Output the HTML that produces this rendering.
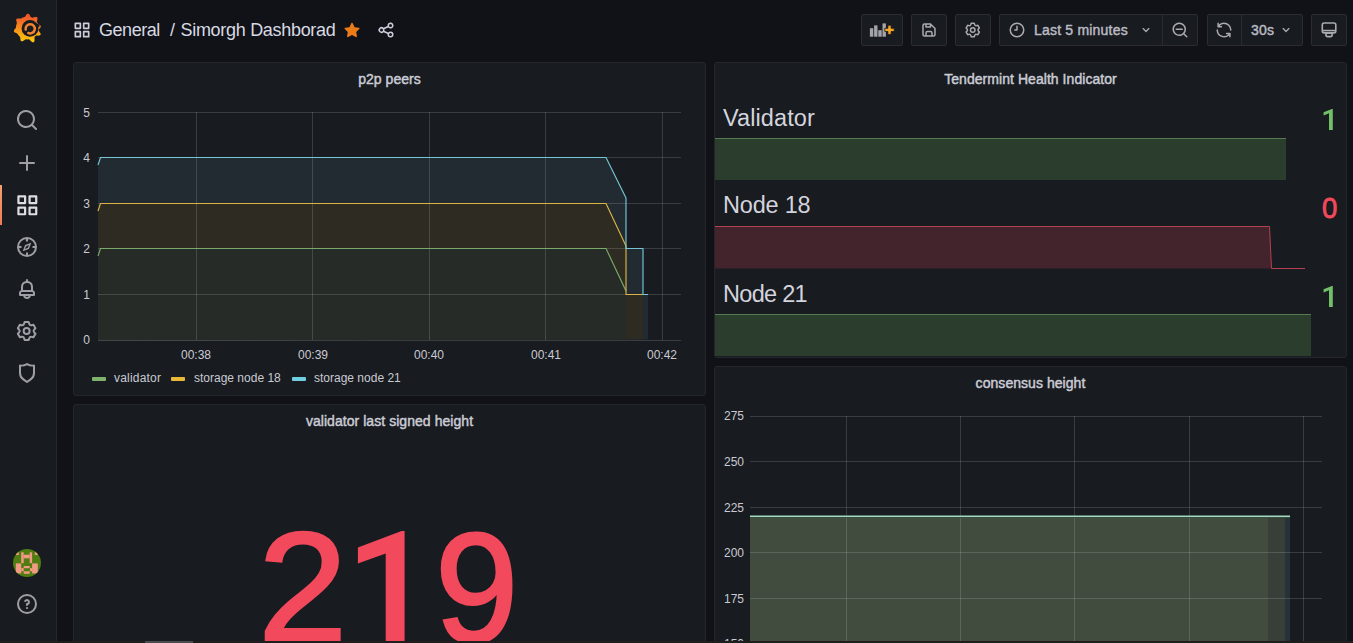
<!DOCTYPE html>
<html><head><meta charset="utf-8">
<style>
*{box-sizing:border-box}
html,body{margin:0;padding:0;width:1353px;height:643px;overflow:hidden;background:#111217;font-family:"Liberation Sans",sans-serif;color:#ccccdc}
.abs{position:absolute}
#side{position:absolute;left:0;top:0;width:57px;height:643px;background:#181b1f;border-right:1px solid #25272c}
.sico{position:absolute;left:15px;width:24px;height:24px;fill:#9d9ea6}
.btn{position:absolute;top:14px;height:32px;background:#181b1f;border:1px solid #2a2c31;border-radius:2px}
.ico{position:absolute;width:18px;height:18px;fill:#a9aab2}
.panel{position:absolute;background:#181b1f;border:1px solid #24262b;border-radius:3px;overflow:hidden}
.ptitle{position:absolute;left:0;right:0;text-align:center;font-size:14px;line-height:16px;font-weight:400;letter-spacing:0.05px;-webkit-text-stroke:0.45px #cbccd6;color:#cbccd6;white-space:nowrap}
.lbl{position:absolute;font-size:12px;line-height:14px;color:#c9cad3;white-space:nowrap}
.yl{position:absolute;font-size:12px;line-height:14px;color:#c9cad3;text-align:right;width:40px}
.xl{position:absolute;font-size:12px;line-height:14px;color:#c9cad3;text-align:center;width:60px}
.hname{position:absolute;left:9px;font-size:23.5px;line-height:28px;color:#d3d4de;white-space:nowrap}
.hval{position:absolute;right:12px;font-size:29px;line-height:34px;white-space:nowrap}
</style></head><body>
<div id="side">
  <!-- logo -->
  <svg class="abs" style="left:13px;top:13px" width="30" height="30" viewBox="0 0 30 30">
    <defs><linearGradient id="lg" x1="0" y1="0" x2="0" y2="1"><stop offset="0.1" stop-color="#f1582b"/><stop offset="0.95" stop-color="#fcc60c"/></linearGradient></defs>
    <path fill="url(#lg)" d="M2.72,15.00 L2.89,14.60 L2.93,14.20 L2.96,13.81 L3.01,13.41 L3.07,13.02 L3.15,12.63 L3.24,12.24 L3.34,11.86 L3.46,11.48 L3.59,11.10 L3.73,10.73 L3.86,10.35 L3.87,9.91 L3.76,9.40 L3.58,8.81 L3.38,8.18 L3.23,7.53 L3.18,6.92 L3.26,6.38 L3.50,5.94 L3.89,5.63 L4.41,5.45 L5.03,5.40 L5.69,5.43 L6.34,5.52 L6.95,5.59 L7.48,5.61 L7.91,5.53 L8.26,5.33 L8.60,5.13 L8.95,4.93 L9.30,4.75 L9.66,4.59 L10.03,4.43 L10.40,4.29 L10.78,4.16 L11.16,4.04 L11.54,3.94 L11.91,3.75 L12.25,3.39 L12.60,2.89 L12.97,2.31 L13.37,1.72 L13.82,1.20 L14.30,0.82 L14.80,0.63 L15.30,0.66 L15.78,0.90 L16.22,1.33 L16.61,1.89 L16.95,2.52 L17.26,3.13 L17.55,3.67 L17.85,4.06 L18.20,4.29 L18.57,4.43 L18.94,4.59 L19.31,4.73 L19.76,4.72 L20.32,4.58 L20.96,4.35 L21.65,4.10 L22.36,3.91 L23.03,3.82 L23.62,3.90 L24.07,4.15 L24.37,4.58 L24.50,5.15 L24.49,5.82 L24.37,6.55 L24.20,7.27 L24.04,7.93 L23.95,8.49 L23.99,8.94 L24.17,9.30 L24.37,9.65 L24.55,10.00 L24.71,10.36 L24.94,10.70 L25.28,11.00 L25.72,11.29 L26.22,11.58 L26.72,11.90 L27.18,12.26 L27.53,12.67 L27.75,13.11 L27.81,13.58 L27.70,14.06 L27.45,14.54 L27.10,15.00 L26.69,15.43 L26.28,15.84 L25.92,16.22 L25.66,16.60 L25.53,16.98 L25.57,17.39 L25.80,17.87 L26.19,18.41 L26.65,19.01 L27.11,19.66 L27.47,20.32 L27.67,20.95 L27.67,21.52 L27.43,21.98 L26.98,22.32 L26.35,22.53 L25.60,22.62 L24.81,22.63 L24.05,22.62 L23.38,22.62 L22.86,22.71 L22.50,22.92 L22.22,23.20 L21.93,23.47 L21.65,23.76 L21.51,24.23 L21.49,24.90 L21.53,25.72 L21.56,26.61 L21.52,27.50 L21.37,28.29 L21.08,28.89 L20.65,29.25 L20.09,29.33 L19.45,29.14 L18.76,28.73 L18.07,28.16 L17.43,27.54 L16.84,26.97 L16.33,26.54 L15.89,26.32 L15.49,26.34 L15.10,26.37 L14.70,26.39 L14.30,26.40 L13.90,26.39 L13.50,26.37 L13.11,26.34 L12.71,26.32 L12.28,26.46 L11.80,26.75 L11.27,27.15 L10.69,27.59 L10.08,27.97 L9.48,28.25 L8.91,28.35 L8.40,28.25 L7.99,27.94 L7.68,27.45 L7.48,26.81 L7.36,26.10 L7.30,25.38 L7.24,24.72 L7.14,24.17 L6.96,23.75 L6.67,23.47 L6.38,23.20 L6.10,22.92 L5.83,22.63 L5.57,22.33 L5.32,22.02 L5.08,21.70 L4.85,21.37 L4.63,21.04 L4.41,20.71 L4.08,20.44 L3.63,20.21 L3.09,19.99 L2.51,19.76 L1.96,19.49 L1.47,19.17 L1.11,18.78 L0.91,18.34 L0.88,17.85 L1.02,17.34 L1.29,16.83 L1.66,16.33 L2.06,15.86 L2.43,15.41Z"/>
    <circle cx="17" cy="15.4" r="8.4" fill="#181b1f"/>
    <path d="M22.5,9.8 L26.6,11.8 L26.2,14.2 L24.8,14.2Z" fill="#181b1f"/>
    <path fill="none" stroke="#f3842f" stroke-width="2.5" stroke-linecap="round" d="M12.67,16.60 A4.6,4.6 0 1 1 15.26,19.97"/>
  </svg>
  <svg class="sico" style="top:108px" viewBox="0 0 24 24"><path d="M21.71,20.29,18,16.61A9,9,0,1,0,16.61,18l3.68,3.68a1,1,0,0,0,1.42,0A1,1,0,0,0,21.71,20.29ZM11,18a7,7,0,1,1,7-7A7,7,0,0,1,11,18Z"/></svg>
  <svg class="sico" style="top:151px" viewBox="0 0 24 24"><path d="M19,11H13V5a1,1,0,0,0-2,0v6H5a1,1,0,0,0,0,2h6v6a1,1,0,0,0,2,0V13h6a1,1,0,0,0,0-2Z"/></svg>
  <div class="abs" style="left:0;top:185px;width:2px;height:40px;background:linear-gradient(#f4a06c,#ee7d57)"></div>
  <svg class="sico" style="left:13.7px;top:191.7px;width:26.7px;height:26.7px;fill:#dcdce4" viewBox="0 0 24 24"><path d="M10,13H4a1,1,0,0,0-1,1v6a1,1,0,0,0,1,1h6a1,1,0,0,0,1-1V14A1,1,0,0,0,10,13ZM9,19H5V15H9ZM20,3H14a1,1,0,0,0-1,1v6a1,1,0,0,0,1,1h6a1,1,0,0,0,1-1V4A1,1,0,0,0,20,3ZM19,9H15V5h4Zm1,4H14a1,1,0,0,0-1,1v6a1,1,0,0,0,1,1h6a1,1,0,0,0,1-1V14A1,1,0,0,0,20,13Zm-1,6H15V15h4ZM10,3H4A1,1,0,0,0,3,4v6a1,1,0,0,0,1,1h6a1,1,0,0,0,1-1V4A1,1,0,0,0,10,3ZM9,9H5V5H9Z"/></svg>
  <svg class="sico" style="top:235px" viewBox="0 0 24 24"><path d="M12,2A10,10,0,1,0,22,12,10,10,0,0,0,12,2Zm0,18a8,8,0,1,1,8-8A8,8,0,0,1,12,20Z"/><path d="M16.3,7.7 L13.9,13.9 L7.7,16.3 L10.1,10.1Z M14.1,9.9 L12.8,12.8 L9.9,14.1 L11.2,11.2Z" fill-rule="evenodd"/><path d="M11,3.5h2v3h-2zM11,17.5h2v3h-2zM3.5,11h3v2h-3zM17.5,11h3v2h-3z"/></svg>
  <svg class="sico" style="top:277px" viewBox="0 0 24 24"><path d="M18,13.18V10a6,6,0,0,0-5-5.91V3a1,1,0,0,0-2,0V4.09A6,6,0,0,0,6,10v3.18A3,3,0,0,0,4,16v2a1,1,0,0,0,1,1H8.14a4,4,0,0,0,7.72,0H19a1,1,0,0,0,1-1V16A3,3,0,0,0,18,13.18ZM8,10a4,4,0,0,1,8,0v3H8Zm4,10a2,2,0,0,1-1.72-1h3.44A2,2,0,0,1,12,20Zm6-3H6V16a1,1,0,0,1,1-1H17a1,1,0,0,1,1,1Z"/></svg>
  <svg class="sico" style="top:319px" viewBox="0 0 24 24"><path d="M19.9,12.66a1,1,0,0,1,0-1.32L21.18,9.9a1,1,0,0,0,.12-1.17l-2-3.46a1,1,0,0,0-1.07-.48l-1.880.38a1,1,0,0,1-1.15-.66l-.61-1.83A1,1,0,0,0,13.64,2h-4a1,1,0,0,0-1,.68L8.08,4.510a1,1,0,0,1-1.15.66L5,4.79A1,1,0,0,0,4,5.27L2,8.73A1,1,0,0,0,2.1,9.9l1.27,1.44a1,1,0,0,1,0,1.32L2.1,14.1A1,1,0,0,0,2,15.27l2,3.46a1,1,0,0,0,1.07.48l1.88-.38a1,1,0,0,1,1.15.66l.61,1.83a1,1,0,0,0,1,.68h4a1,1,0,0,0,.95-.68l.61-1.83a1,1,0,0,1,1.15-.66l1.88.38a1,1,0,0,0,1.07-.48l2-3.46a1,1,0,0,0-.12-1.17ZM18.41,14l.8.9-1.28,2.22-1.18-.24a3,3,0,0,0-3.45,2L12.92,20H10.36L10,18.86a3,3,0,0,0-3.45-2l-1.18.24L4.070,14.89l.8-.9a3,3,0,0,0,0-4l-.8-.9L5.35,6.890l1.18.24a3,3,0,0,0,3.45-2L10.36,4h2.56l.38,1.14a3,3,0,0,0,3.45,2l1.18-.24,1.28,2.22-.8.9A3,3,0,0,0,18.41,14ZM11.64,8a4,4,0,1,0,4,4A4,4,0,0,0,11.64,8Zm0,6a2,2,0,1,1,2-2A2,2,0,0,1,11.64,14Z"/></svg>
  <svg class="sico" style="top:361px" viewBox="0 0 24 24"><path d="M19.63,3.65a1,1,0,0,0-.84-.2,8,8,0,0,1-6.22-1.27,1,1,0,0,0-1.140,0A8,8,0,0,1,5.21,3.45a1,1,0,0,0-.84.2A1,1,0,0,0,4,4.43v7.45a9,9,0,0,0,3.77,7.33l3.65,2.6a1,1,0,0,0,1.16,0l3.65-2.6A9,9,0,0,0,20,11.88V4.43A1,1,0,0,0,19.63,3.65ZM18,11.88a7,7,0,0,1-2.93,5.7L12,19.77,8.930,17.58A7,7,0,0,1,6,11.88V5.58a10,10,0,0,0,6-1.39,10,10,0,0,0,6,1.39Z"/></svg>
  <!-- avatar -->
  <svg class="abs" style="left:13px;top:549px" width="28" height="28" viewBox="0 0 28 28">
    <defs><clipPath id="av"><circle cx="14" cy="14" r="14"/></clipPath></defs>
    <g clip-path="url(#av)">
    <rect width="28" height="28" fill="#4f7d12"/>
    <g fill="#f19a84">
    <rect x="8.2" y="3.3" width="2.5" height="10.9"/><rect x="16.7" y="3.3" width="2.4" height="10.9"/>
    <rect x="10.7" y="5.7" width="6" height="3.6"/>
    <rect x="3" y="3.3" width="2.8" height="2.7"/><rect x="21.8" y="3.3" width="2.8" height="2.7"/>
    <rect x="2.8" y="14.4" width="5.4" height="10"/><rect x="8.2" y="19.1" width="2.5" height="3.2"/>
    <rect x="19.1" y="14.4" width="5.7" height="10"/><rect x="16.9" y="19.1" width="2.2" height="3.2"/>
    <rect x="10.7" y="17" width="6" height="2.2"/><rect x="10.7" y="22.3" width="6" height="2.5"/>
    </g></g>
  </svg>
  <svg class="sico" style="top:592px" viewBox="0 0 24 24"><path d="M11.29,15.29a1.58,1.58,0,0,0-.12.15.76.76,0,0,0-.09.18.64.64,0,0,0-.06.18,1.36,1.36,0,0,0,0,.2.84.84,0,0,0,.08.38.9.9,0,0,0,.54.54.94.94,0,0,0,.76,0,.9.9,0,0,0,.54-.54A1,1,0,0,0,13,16a1,1,0,0,0-.29-.71A1,1,0,0,0,11.29,15.29ZM12,2A10,10,0,1,0,22,12,10,10,0,0,0,12,2Zm0,18a8,8,0,1,1,8-8A8,8,0,0,1,12,20ZM12,7A3,3,0,0,0,9.4,8.5a1,1,0,1,0,1.73,1A1,1,0,0,1,12,9a1,1,0,0,1,0,2,1,1,0,0,0-1,1v1a1,1,0,0,0,2,0v-.18A3,3,0,0,0,12,7Z"/></svg>
</div>

<!-- header -->
<svg class="abs" style="left:72px;top:20px;fill:#ccccdc" width="20" height="20" viewBox="0 0 24 24"><path d="M10,13H4a1,1,0,0,0-1,1v6a1,1,0,0,0,1,1h6a1,1,0,0,0,1-1V14A1,1,0,0,0,10,13ZM9,19H5V15H9ZM20,3H14a1,1,0,0,0-1,1v6a1,1,0,0,0,1,1h6a1,1,0,0,0,1-1V4A1,1,0,0,0,20,3ZM19,9H15V5h4Zm1,4H14a1,1,0,0,0-1,1v6a1,1,0,0,0,1,1h6a1,1,0,0,0,1-1V14A1,1,0,0,0,20,13Zm-1,6H15V15h4ZM10,3H4A1,1,0,0,0,3,4v6a1,1,0,0,0,1,1h6a1,1,0,0,0,1-1V4A1,1,0,0,0,10,3ZM9,9H5V5H9Z"/></svg>
<div class="abs" style="left:99px;top:19px;font-size:18px;line-height:22px;color:#d8d9e3;white-space:nowrap;letter-spacing:-0.45px">General</div>
<div class="abs" style="left:170px;top:19px;font-size:18px;line-height:22px;color:#d8d9e3;white-space:nowrap">/</div><div class="abs" style="left:180.5px;top:19px;font-size:18px;line-height:22px;color:#d8d9e3;white-space:nowrap;letter-spacing:-0.3px">Simorgh Dashborad</div>
<svg class="abs" style="left:343px;top:21px;fill:#eb7b18" width="18" height="18" viewBox="0 0 24 24"><path d="M22,10.1c0.1-0.5-0.3-1.1-0.8-1.1l-5.7-0.8L12.9,3c-0.1-0.2-0.2-0.3-0.4-0.4C12,2.3,11.4,2.5,11.1,3L8.6,8.2L2.9,9C2.6,9,2.4,9.1,2.3,9.3c-0.4,0.4-0.4,1,0,1.4l4.1,4l-1,5.7c0,0.2,0,0.4,0.1,0.6c0.3,0.5,0.9,0.7,1.4,0.4l5.1-2.7l5.1,2.7c0.1,0.1,0.3,0.1,0.5,0.1v0c0.1,0,0.1,0,0.2,0c0.5-0.1,0.9-0.6,0.8-1.2l-1-5.7l4.1-4C21.9,10.5,22,10.3,22,10.1z"/></svg>
<svg class="abs" style="left:377px;top:21px;fill:#ccccdc" width="18" height="18" viewBox="0 0 24 24"><path d="M18,14a4,4,0,0,0-3.08,1.48l-5.1-2.35a3.64,3.64,0,0,0,0-2.26l5.1-2.35A4,4,0,1,0,14,6a4.17,4.17,0,0,0,.07.71L8.79,9.140a4,4,0,1,0,0,5.72l5.28,2.43A4.170,4.17,0,0,0,14,18a4,4,0,1,0,4-4ZM18,4a2,2,0,1,1-2,2A2,2,0,0,1,18,4ZM6,14a2,2,0,1,1,2-2A2,2,0,0,1,6,14Zm12,6a2,2,0,1,1,2-2A2,2,0,0,1,18,20Z"/></svg>

<div class="btn" style="left:861px;width:42px">
  <svg class="abs" style="left:7px;top:7px" width="26" height="16" viewBox="0 0 26 16">
    <g fill="#a3a4ac"><rect x="0.9" y="6.2" width="3.4" height="8.5"/><rect x="5.1" y="3.4" width="3.4" height="11.3"/><rect x="9.3" y="8.2" width="3.4" height="6.5"/><rect x="13.5" y="1.4" width="3.4" height="13.3"/></g>
    <path fill="#f5a623" stroke="#181b1f" stroke-width="0.8" d="M18.9,3.2h3.2v3.1h3.1v3.2h-3.1v3.1h-3.2v-3.1h-3.1v-3.2h3.1z"/>
  </svg>
</div>
<div class="btn" style="left:911px;width:36px"><svg class="ico" style="left:8px;top:6px" viewBox="0 0 24 24"><path d="M20.71,9.29l-6-6a1,1,0,0,0-.32-.21A1.09,1.09,0,0,0,14,3H6A3,3,0,0,0,3,6V18a3,3,0,0,0,3,3H18a3,3,0,0,0,3-3V10A1,1,0,0,0,20.71,9.29ZM9,5h4V7H9Zm6,14H9V16a1,1,0,0,1,1-1h4a1,1,0,0,1,1,1Zm4-1a1,1,0,0,1-1,1H17V16a3,3,0,0,0-3-3H10a3,3,0,0,0-3,3v3H6a1,1,0,0,1-1-1V6A1,1,0,0,1,6,5H7V8A1,1,0,0,0,8,9h6a1,1,0,0,0,1-1V6.41l4,4Z"/></svg></div>
<div class="btn" style="left:955px;width:36px"><svg class="ico" style="left:8px;top:6px" viewBox="0 0 24 24"><path d="M19.9,12.66a1,1,0,0,1,0-1.32L21.18,9.9a1,1,0,0,0,.12-1.17l-2-3.46a1,1,0,0,0-1.07-.48l-1.88.38a1,1,0,0,1-1.15-.66l-.61-1.83A1,1,0,0,0,13.64,2h-4a1,1,0,0,0-1,.68L8.08,4.51a1,1,0,0,1-1.15.66L5,4.79A1,1,0,0,0,4,5.27L2,8.73A1,1,0,0,0,2.1,9.9l1.27,1.44a1,1,0,0,1,0,1.32L2.1,14.1A1,1,0,0,0,2,15.27l2,3.46a1,1,0,0,0,1.07.48l1.88-.38a1,1,0,0,1,1.15.66l.61,1.83a1,1,0,0,0,1,.68h4a1,1,0,0,0,.95-.68l.61-1.83a1,1,0,0,1,1.15-.66l1.88.38a1,1,0,0,0,1.07-.48l2-3.46a1,1,0,0,0-.12-1.17ZM18.41,14l.8.9-1.28,2.22-1.18-.24a3,3,0,0,0-3.45,2L12.92,20H10.36L10,18.86a3,3,0,0,0-3.45-2l-1.18.24L4.07,14.89l.8-.9a3,3,0,0,0,0-4l-.8-.9L5.35,6.89l1.18.24a3,3,0,0,0,3.45-2L10.36,4h2.56l.38,1.14a3,3,0,0,0,3.45,2l1.18-.24,1.28,2.22-.8.9A3,3,0,0,0,18.41,14ZM11.64,8a4,4,0,1,0,4,4A4,4,0,0,0,11.64,8Zm0,6a2,2,0,1,1,2-2A2,2,0,0,1,11.64,14Z"/></svg></div>
<div class="btn" style="left:999px;width:199px">
  <svg class="ico" style="left:8px;top:6px" viewBox="0 0 24 24"><path d="M12,2A10,10,0,1,0,22,12,10,10,0,0,0,12,2Zm0,18a8,8,0,1,1,8-8A8,8,0,0,1,12,20Zm0-14a1,1,0,0,0-1,1v4H9a1,1,0,0,0,0,2h3a1,1,0,0,0,1-1V7A1,1,0,0,0,12,6Z"/></svg>
  <div class="abs" style="left:34px;top:7px;font-size:14px;line-height:16px;letter-spacing:0.2px;-webkit-text-stroke:0.45px #b9bac3;color:#b9bac3;white-space:nowrap">Last 5 minutes</div>
  <svg class="ico" style="left:138px;top:7px;width:16px;height:16px" viewBox="0 0 24 24"><path d="M17,9.17a1,1,0,0,0-1.41,0L12,12.71,8.46,9.17a1,1,0,0,0-1.41,0,1,1,0,0,0,0,1.42l4.24,4.24a1,1,0,0,0,1.42,0L17,10.59A1,1,0,0,0,17,9.17Z"/></svg>
  <div class="abs" style="left:162px;top:0;width:1px;height:30px;background:#2a2c31"></div>
  <svg class="ico" style="left:171px;top:6px" viewBox="0 0 24 24"><path d="M21.71,20.29,18,16.61A9,9,0,1,0,16.61,18l3.68,3.680a1,1,0,0,0,1.42,0A1,1,0,0,0,21.71,20.29ZM11,18a7,7,0,1,1,7-7A7,7,0,0,1,11,18Zm4-8H7a1,1,0,0,0,0,2h8a1,1,0,0,0,0-2Z"/></svg>
</div>
<div class="btn" style="left:1207px;width:96px">
  <svg class="ico" style="left:7px;top:6px" viewBox="0 0 24 24"><path d="M19.91,15.51H15.38a1,1,0,0,0,0,2h2.4A8,8,0,0,1,4,12a1,1,0,0,0-2,0,10,10,0,0,0,16.88,7.23V21a1,1,0,0,0,2,0V16.5A1,1,0,0,0,19.91,15.51ZM12,2A10,10,0,0,0,5.12,4.77V3a1,1,0,0,0-2,0V7.5a1,1,0,0,0,1,1h4.5a1,1,0,0,0,0-2H6.22A8,8,0,0,1,20,12a1,1,0,0,0,2,0A10,10,0,0,0,12,2Z"/></svg>
  <div class="abs" style="left:33px;top:0;width:1px;height:30px;background:#2a2c31"></div>
  <div class="abs" style="left:43px;top:7px;font-size:14px;line-height:16px;letter-spacing:0.2px;-webkit-text-stroke:0.45px #b9bac3;color:#b9bac3;white-space:nowrap">30s</div>
  <svg class="ico" style="left:70px;top:7px;width:16px;height:16px" viewBox="0 0 24 24"><path d="M17,9.17a1,1,0,0,0-1.41,0L12,12.71,8.46,9.17a1,1,0,0,0-1.41,0,1,1,0,0,0,0,1.42l4.24,4.24a1,1,0,0,0,1.42,0L17,10.59A1,1,0,0,0,17,9.17Z"/></svg>
</div>
<div class="btn" style="left:1311px;width:36px"><svg class="abs" style="left:0;top:0" width="34" height="30" viewBox="0 0 34 30">
<g fill="none" stroke="#a9aab2" stroke-width="1.6">
<rect x="10.3" y="8" width="13.5" height="9.9" rx="1.8"/>
<path d="M10.3,15.55H23.8"/>
<rect x="13.9" y="18" width="6.3" height="3.6" rx="1.8"/>
</g></svg></div>

<!-- panels -->
<div class="panel" style="left:73px;top:62px;width:633px;height:334px">
  <div class="ptitle" style="top:8px">p2p peers</div>
</div>
<div class="panel" style="left:714px;top:62px;width:633px;height:296px">
  <div class="ptitle" style="top:8px">Tendermint Health Indicator</div>
</div>
<div class="panel" style="left:73px;top:404px;width:633px;height:260px">
  <div class="ptitle" style="top:8px">validator last signed height</div>
</div>
<div class="panel" style="left:714px;top:366px;width:633px;height:300px">
  <div class="ptitle" style="top:8px">consensus height</div>
</div>

<!-- chart overlay -->
<svg class="abs" style="left:0;top:0" width="1353" height="643" viewBox="0 0 1353 643">
  <!-- p2p peers fills -->
  <path fill="#212b31" d="M98,165 L100.5,157.5 L606,157.5 L626,198 L626,248.5 L643,248.5 L643,294.5 L648,294.5 L648,339.5 L98,340.5Z"/>
  <path fill="#2e2b23" d="M98,211 L100.5,203.5 L606,203.5 L626,246 L626,294.5 L643,294.5 L643,339.5 L98,340.5Z"/>
  <path fill="#262b27" d="M98,256 L100.5,248.5 L606,248.5 L626,291 L626,339.5 L98,340.5Z"/>
  <g stroke="rgba(230,235,245,0.16)" stroke-width="1" fill="none">
    <path d="M98,112.5H681M98,157.5H681M98,203.5H681M98,248.5H681M98,294.5H681M98,340.5H681"/>
    <path d="M196.5,112V340M312.5,112V340M429.5,112V340M545.5,112V340M662.5,112V340"/>
  </g>
  <g fill="none" stroke-width="1.15" stroke-linejoin="round">
    <path stroke="#7aab6a" d="M98,256 L100.5,248.5 L606,248.5 L626,291"/>
    <path stroke="#dab346" d="M98,211 L100.5,203.5 L606,203.5 L626,246 L626,294.5 L643,294.5"/>
    <path stroke="#74c6d6" d="M98,165 L100.5,157.5 L606,157.5 L626,198 L626,248.5 L643,248.5 L643,294.5 L648,294.5"/>
  </g>
  <!-- consensus fills -->
  <rect x="750" y="516" width="540" height="127" fill="#263238"/>
  <rect x="750" y="516" width="535" height="127" fill="#383f38"/>
  <rect x="750" y="516" width="518" height="127" fill="#424c3e"/>
  <g stroke="rgba(230,235,245,0.16)" stroke-width="1" fill="none">
    <path d="M750,416.5H1322M750,461.5H1322M750,507.5H1322M750,552.5H1322M750,598.5H1322"/>
    <path d="M846.5,416V643M960.5,416V643M1074.5,416V643M1189.5,416V643M1303.5,416V643"/>
  </g>
  <path d="M750,517.5H1290" stroke="#34503c" stroke-width="1"/><path d="M750,516.2H1290" stroke="#a3d8c6" stroke-width="1.5"/>
  <!-- health areas -->
  <rect x="715" y="138" width="571" height="42" fill="#2b3d2d"/>
  <path d="M715,138.5H1286" stroke="#557a4d" stroke-width="1"/>
  <path d="M715,226.5 L1269.5,226.5 L1271.5,268.5 L715,268.5Z" fill="#43242c"/>
  <path d="M715,226.5 L1269.5,226.5 L1271.5,268.5 L1305,268.5" fill="none" stroke="#b5404f" stroke-width="1"/>
  <rect x="715" y="314" width="596" height="42" fill="#2b3d2d"/>
  <path d="M715,314.5H1311" stroke="#557a4d" stroke-width="1"/>
</svg>

<!-- p2p labels -->
<div class="yl" style="left:50px;top:106px">5</div>
<div class="yl" style="left:50px;top:151px">4</div>
<div class="yl" style="left:50px;top:197px">3</div>
<div class="yl" style="left:50px;top:242px">2</div>
<div class="yl" style="left:50px;top:288px">1</div>
<div class="yl" style="left:50px;top:333px">0</div>
<div class="xl" style="left:166px;top:348px">00:38</div>
<div class="xl" style="left:283px;top:348px">00:39</div>
<div class="xl" style="left:399px;top:348px">00:40</div>
<div class="xl" style="left:516px;top:348px">00:41</div>
<div class="xl" style="left:632px;top:348px">00:42</div>
<div class="abs" style="left:92px;top:377px;width:14px;height:4px;border-radius:1px;background:#7eb26d"></div>
<div class="lbl" style="left:114px;top:371px;letter-spacing:0.2px">validator</div>
<div class="abs" style="left:171px;top:377px;width:14px;height:4px;border-radius:1px;background:#eab839"></div>
<div class="lbl" style="left:194px;top:371px">storage node 18</div>
<div class="abs" style="left:292px;top:377px;width:14px;height:4px;border-radius:1px;background:#6ed0e0"></div>
<div class="lbl" style="left:314px;top:371px">storage node 21</div>

<!-- health texts -->
<div class="hname" style="left:723px;top:103.5px;letter-spacing:0.1px">Validator</div>
<div class="hname" style="left:723px;top:191px;letter-spacing:-0.2px">Node 18</div>
<div class="hname" style="left:723px;top:279.8px;letter-spacing:-0.7px">Node 21</div>
<svg class="abs" style="left:0;top:0" width="1353" height="643"><path fill="#73bf69" d="M1332.8,109 L1332.8,130 L1329,130 L1329,113.3 L1323.6,115.4 L1323.6,112.3 L1331.9,109Z M1332.8,286 L1332.8,307 L1329,307 L1329,290.3 L1323.6,292.4 L1323.6,289.3 L1331.9,286Z"/></svg>
<div class="hval" style="left:1322px;top:191px;font-size:30px;color:#f2495c;-webkit-text-stroke:0.8px #f2495c;transform:scaleX(0.92);transform-origin:0 0;right:auto">0</div>


<!-- consensus labels -->
<div class="yl" style="left:704px;top:409px">275</div>
<div class="yl" style="left:704px;top:455px">250</div>
<div class="yl" style="left:704px;top:501px">225</div>
<div class="yl" style="left:704px;top:546px">200</div>
<div class="yl" style="left:704px;top:592px">175</div>
<div class="yl" style="left:704px;top:637px">150</div>

<!-- big stat -->
<div class="abs" id="d2" style="left:258px;transform:scaleX(1.03);transform-origin:0 0;top:497px;font-size:156px;line-height:180px;color:#f2495c;-webkit-text-stroke:2.6px #f2495c;white-space:nowrap">2</div>
<div class="abs" id="d9" style="left:435px;top:497px;font-size:156px;line-height:180px;color:#f2495c;-webkit-text-stroke:2.6px #f2495c;white-space:nowrap;transform:scaleX(0.96);transform-origin:0 0">9</div>
<svg class="abs" style="left:0;top:0" width="1353" height="643"><path fill="#f2495c" d="M404.6,531 L404.6,650 L385.7,650 L385.7,553.5 L357.9,563.5 L357.9,547.5 L401.5,531Z"/></svg>

<!-- bottom scrollbar -->
<div class="abs" style="left:0;top:641px;width:1353px;height:2px;background:#1f1e1c"></div>
<div class="abs" style="left:145px;top:641px;width:48px;height:2px;background:#4b4b4d"></div>
</body></html>
